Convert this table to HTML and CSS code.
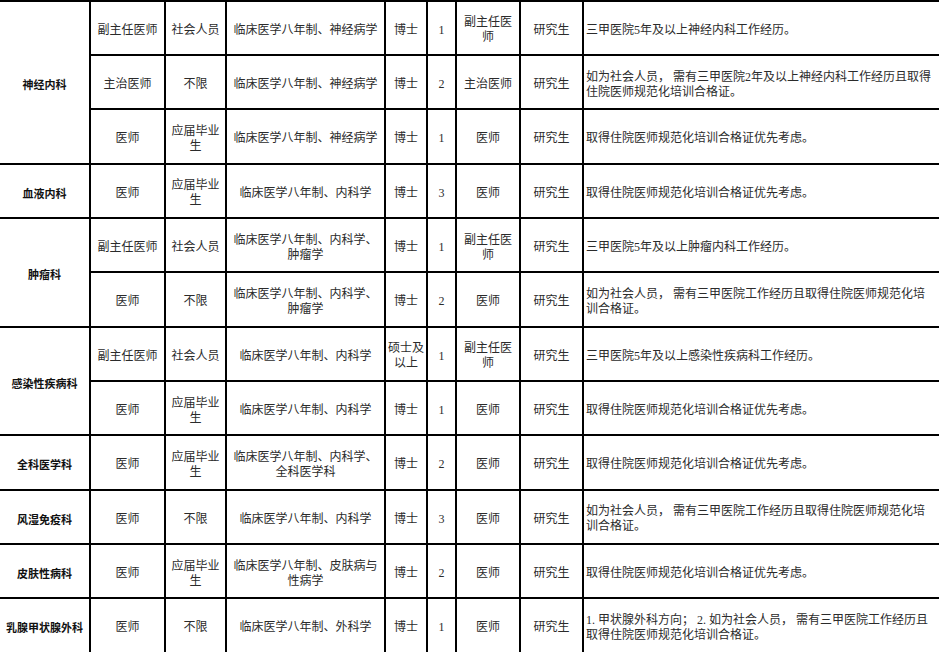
FILE: index.html
```html
<!DOCTYPE html>
<html lang="zh-CN">
<head>
<meta charset="utf-8">
<title>招聘岗位表</title>
<link rel="stylesheet" href="styles.css">
</head>
<body>
<div class="sheet">
  <div class="cell dept span3">神经内科</div>
  <div class="cell">副主任医师</div><div class="cell">社会人员</div><div class="cell">临床医学八年制、神经病学</div><div class="cell">博士</div><div class="cell">1</div><div class="cell">副主任医<br>师</div><div class="cell">研究生</div>
  <div class="cell req">三甲医院5年及以上神经内科工作经历。</div>
  <div class="cell">主治医师</div><div class="cell">不限</div><div class="cell">临床医学八年制、神经病学</div><div class="cell">博士</div><div class="cell">2</div><div class="cell">主治医师</div><div class="cell">研究生</div>
  <div class="cell req">如为社会人员， 需有三甲医院2年及以上神经内科工作经历且取得<br>住院医师规范化培训合格证。</div>
  <div class="cell">医师</div><div class="cell">应届毕业<br>生</div><div class="cell">临床医学八年制、神经病学</div><div class="cell">博士</div><div class="cell">1</div><div class="cell">医师</div><div class="cell">研究生</div>
  <div class="cell req">取得住院医师规范化培训合格证优先考虑。</div>

  <div class="cell dept">血液内科</div>
  <div class="cell">医师</div><div class="cell">应届毕业<br>生</div><div class="cell">临床医学八年制、内科学</div><div class="cell">博士</div><div class="cell">3</div><div class="cell">医师</div><div class="cell">研究生</div>
  <div class="cell req">取得住院医师规范化培训合格证优先考虑。</div>

  <div class="cell dept span2">肿瘤科</div>
  <div class="cell">副主任医师</div><div class="cell">社会人员</div><div class="cell">临床医学八年制、内科学、<br>肿瘤学</div><div class="cell">博士</div><div class="cell">1</div><div class="cell">副主任医<br>师</div><div class="cell">研究生</div>
  <div class="cell req">三甲医院5年及以上肿瘤内科工作经历。</div>
  <div class="cell">医师</div><div class="cell">不限</div><div class="cell">临床医学八年制、内科学、<br>肿瘤学</div><div class="cell">博士</div><div class="cell">2</div><div class="cell">医师</div><div class="cell">研究生</div>
  <div class="cell req">如为社会人员， 需有三甲医院工作经历且取得住院医师规范化培<br>训合格证。</div>

  <div class="cell dept span2">感染性疾病科</div>
  <div class="cell">副主任医师</div><div class="cell">社会人员</div><div class="cell">临床医学八年制、内科学</div><div class="cell">硕士及<br>以上</div><div class="cell">1</div><div class="cell">副主任医<br>师</div><div class="cell">研究生</div>
  <div class="cell req">三甲医院5年及以上感染性疾病科工作经历。</div>
  <div class="cell">医师</div><div class="cell">应届毕业<br>生</div><div class="cell">临床医学八年制、内科学</div><div class="cell">博士</div><div class="cell">1</div><div class="cell">医师</div><div class="cell">研究生</div>
  <div class="cell req">取得住院医师规范化培训合格证优先考虑。</div>

  <div class="cell dept">全科医学科</div>
  <div class="cell">医师</div><div class="cell">应届毕业<br>生</div><div class="cell">临床医学八年制、内科学、<br>全科医学科</div><div class="cell">博士</div><div class="cell">2</div><div class="cell">医师</div><div class="cell">研究生</div>
  <div class="cell req">取得住院医师规范化培训合格证优先考虑。</div>

  <div class="cell dept">风湿免疫科</div>
  <div class="cell">医师</div><div class="cell">不限</div><div class="cell">临床医学八年制、内科学</div><div class="cell">博士</div><div class="cell">3</div><div class="cell">医师</div><div class="cell">研究生</div>
  <div class="cell req">如为社会人员， 需有三甲医院工作经历且取得住院医师规范化培<br>训合格证。</div>

  <div class="cell dept">皮肤性病科</div>
  <div class="cell">医师</div><div class="cell">应届毕业<br>生</div><div class="cell">临床医学八年制、皮肤病与<br>性病学</div><div class="cell">博士</div><div class="cell">2</div><div class="cell">医师</div><div class="cell">研究生</div>
  <div class="cell req">取得住院医师规范化培训合格证优先考虑。</div>

  <div class="cell dept">乳腺甲状腺外科</div>
  <div class="cell">医师</div><div class="cell">不限</div><div class="cell">临床医学八年制、外科学</div><div class="cell">博士</div><div class="cell">1</div><div class="cell">医师</div><div class="cell">研究生</div>
  <div class="cell req">1. 甲状腺外科方向； 2. 如为社会人员， 需有三甲医院工作经历且<br>取得住院医师规范化培训合格证。</div>
</div>
</body>
</html>
```

FILE: styles.css
```css
html, body {
  margin: 0;
  padding: 0;
  background: #fff;
}

body {
  width: 939px;
  height: 652px;
  overflow: hidden;
}

.sheet {
  display: grid;
  grid-template-columns: 89px 73px 59px 157px 40px 27px 62px 61px 1fr;
  grid-auto-rows: 52.35px;
  gap: 2px;
  padding-top: 1.5px;
  background: #000;
  width: 939px;
  font-family: "Liberation Serif", "Noto Sans CJK SC", serif;
  font-size: 12px;
  line-height: 15px;
  color: #2b2b2b;
}

.cell {
  background: #fff;
  display: flex;
  align-items: center;
  justify-content: center;
  text-align: center;
  white-space: nowrap;
  overflow: hidden;
  padding-top: 5px;
  box-sizing: border-box;
}

.dept {
  font-family: "Noto Sans CJK SC", sans-serif;
  font-size: 11px;
  font-weight: 700;
  color: #111;
}

.span2 {
  grid-row: span 2;
}

.span3 {
  grid-row: span 3;
}

.req {
  justify-content: flex-start;
  text-align: left;
  padding-left: 2px;
}
```
